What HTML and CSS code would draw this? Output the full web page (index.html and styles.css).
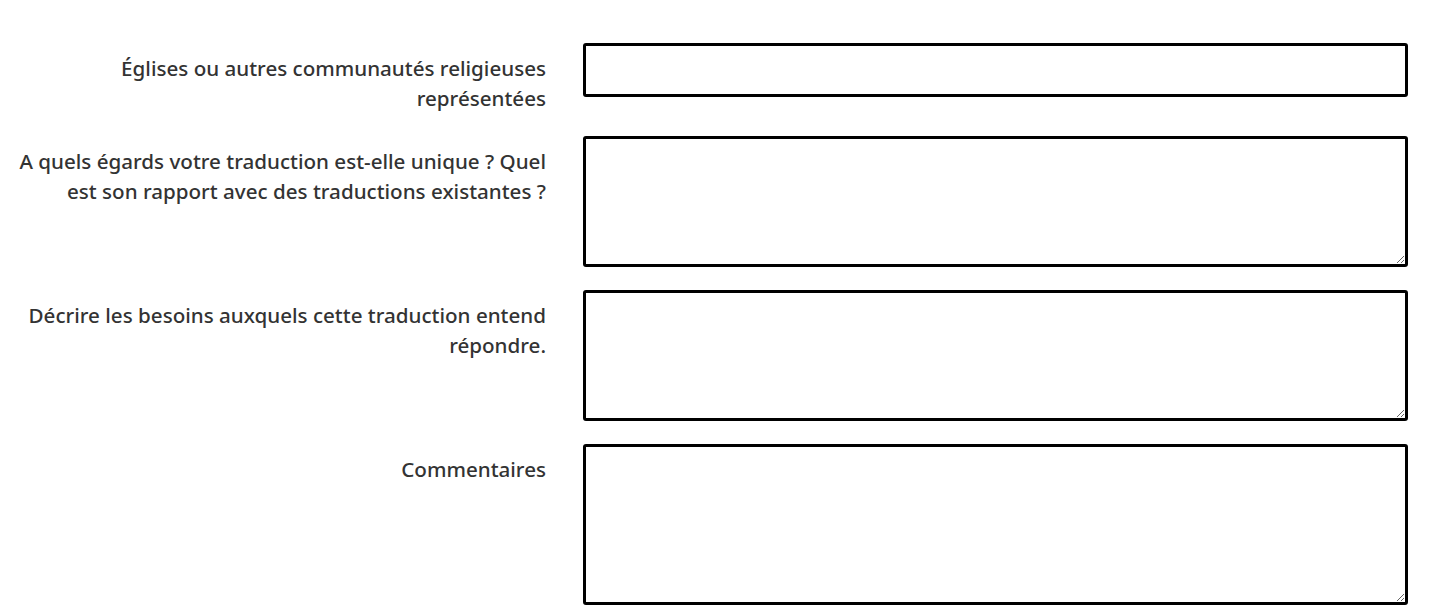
FILE: index.html
```html
<!DOCTYPE html>
<html lang="fr">

<head>
    <meta charset="UTF-8">
    <meta name="viewport" content="width=device-width, initial-scale=1.0">
    <title>Traduction</title>
    <link rel="stylesheet" href="styles.css">
</head>

<body>
    <form class="form">
        <div class="row">
            <label for="churches">Églises ou autres communautés religieuses représentées</label>
            <input type="text" id="churches" name="churches">
        </div>

        <div class="row">
            <label for="unique">A quels égards votre traduction est-elle unique ? Quel est son rapport avec des traductions existantes ?</label>
            <textarea id="unique" name="unique"></textarea>
        </div>

        <div class="row">
            <label for="needs">Décrire les besoins auxquels cette traduction entend répondre.</label>
            <textarea id="needs" name="needs"></textarea>
        </div>

        <div class="row">
            <label for="comments">Commentaires</label>
            <textarea id="comments" name="comments" class="tall"></textarea>
        </div>
    </form>
</body>

</html>
```

FILE: styles.css
```css
body {
    font-family: "Noto Sans", sans-serif;
    margin: 0;
    color: #333;
}

.form {
    padding: 43px 22px 0 15px;
    display: flex;
    flex-direction: column;
    gap: 23px;
}

.row {
    display: grid;
    grid-template-columns: 531px 1fr;
    column-gap: 37px;
    align-items: start;
}

label {
    font-size: 20.6px;
    font-weight: 500;
    line-height: 30px;
    text-align: right;
    padding-top: 10px;
}

input,
textarea {
    box-sizing: border-box;
    width: 100%;
    border: 3px solid #000;
    border-radius: 3px;
    font-family: inherit;
    font-size: 16px;
    padding: 8px 12px;
    margin: 0;
}

input {
    height: 54px;
}

textarea {
    height: 131px;
    display: block;
}

textarea.tall {
    height: 161px;
}
```
